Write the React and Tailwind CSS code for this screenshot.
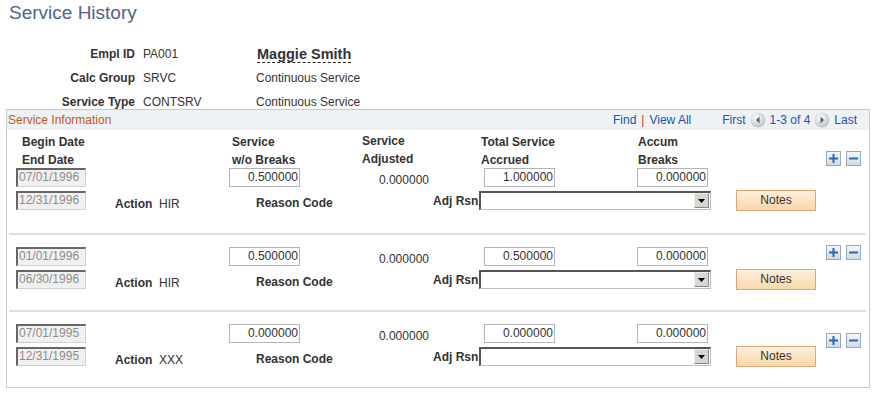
import React from 'react';

const rows = [
  { begin: '07/01/1996', end: '12/31/1996', svc: '0.500000', adj: '0.000000', total: '1.000000', accum: '0.000000', action: 'HIR' },
  { begin: '01/01/1996', end: '06/30/1996', svc: '0.500000', adj: '0.000000', total: '0.500000', accum: '0.000000', action: 'HIR' },
  { begin: '07/01/1995', end: '12/31/1995', svc: '0.000000', adj: '0.000000', total: '0.000000', accum: '0.000000', action: 'XXX' },
];

const NavArrow = ({ dir }) => (
  <svg width="16" height="16" viewBox="0 0 16 16">
    <defs>
      <radialGradient id={'g' + dir} cx="40%" cy="35%" r="70%">
        <stop offset="0%" stopColor="#ffffff" />
        <stop offset="100%" stopColor="#b9bec4" />
      </radialGradient>
    </defs>
    <circle cx="8" cy="8" r="7.5" fill={'url(#g' + dir + ')'} />
    {dir === 'left' ? (
      <path d="M9.5 4.5 L6 8 L9.5 11.5 Z" fill="#5a5f66" />
    ) : (
      <path d="M6.5 4.5 L10 8 L6.5 11.5 Z" fill="#5a5f66" />
    )}
  </svg>
);

const RowButtons = ({ className }) => (
  <div className={'flex gap-[5px] ' + className}>
    <div className="w-[15px] h-[15px] border border-[#98a8b8] bg-gradient-to-b from-[#f4f7fa] to-[#cfdae4] flex items-center justify-center">
      <svg width="11" height="11" viewBox="0 0 11 11">
        <rect x="4.5" y="1" width="2" height="9" fill="#2d68ad" />
        <rect x="1" y="4.5" width="9" height="2" fill="#2d68ad" />
      </svg>
    </div>
    <div className="w-[15px] h-[15px] border border-[#98a8b8] bg-gradient-to-b from-[#f4f7fa] to-[#cfdae4] flex items-center justify-center">
      <svg width="11" height="11" viewBox="0 0 11 11">
        <rect x="1" y="4.5" width="9" height="2" fill="#2d68ad" />
      </svg>
    </div>
  </div>
);

const DateBox = ({ value }) => (
  <div className="ml-[7px] w-[70px] h-[19px] shrink-0 bg-[#f0f0f0] border-t-2 border-l-2 border-r border-b border-t-[#666] border-l-[#666] border-r-[#d0d0d0] border-b-[#d0d0d0] text-[12px] leading-[15px] text-[#8c8c8c] pl-[1px]">
    {value}
  </div>
);

const NumBox = ({ value, className }) => (
  <div className={'w-[71px] h-[19px] shrink-0 border border-[#b4b4b4] bg-white text-right text-[12px] leading-[17px] text-[#333] pr-[1px] ' + className}>
    {value}
  </div>
);

const ServiceRow = ({ row, first, btnClass }) => (
  <div className={'mx-[2px] mr-[3px] flex ' + (first ? 'pb-[23px]' : 'border-t-2 border-[#dedede] pt-[12px] pb-[21px]')}>
    <div className="w-[817px] flex flex-col gap-[4px]">
      <div className="flex items-start h-[19px]">
        <DateBox value={row.begin} />
        <NumBox value={row.svc} className="ml-[143px]" />
        <div className="w-[129px] h-[19px] text-right text-[12px] leading-[19px] text-[#333] pt-[3px] box-content -mb-[3px]">{row.adj}</div>
        <NumBox value={row.total} className="ml-[55px]" />
        <NumBox value={row.accum} className="ml-[82px]" />
      </div>
      <div className="flex items-start h-[19px]">
        <DateBox value={row.end} />
        <div className="ml-[29px] w-[44px] h-[19px] font-bold text-[12px] leading-[19px] text-[#333] translate-y-[4px]">Action</div>
        <div className="w-[97px] h-[19px] text-[12px] leading-[19px] text-[#333] translate-y-[4px]">{row.action}</div>
        <div className="w-[177px] h-[19px] font-bold text-[12px] leading-[19px] text-[#333] translate-y-[3px]">Reason Code</div>
        <div className="w-[46px] h-[19px] font-bold text-[12px] leading-[19px] text-[#333] translate-y-[1px]">Adj Rsn</div>
        <div className="w-[232px] h-[19px] shrink-0 bg-white border-t-2 border-l-2 border-r border-b border-t-[#555] border-l-[#555] border-r-[#bdbdbd] border-b-[#bdbdbd] flex justify-end">
          <div className="w-[15px] h-[15px] mr-[1px] bg-[#d8d6d0] border border-[#eee] border-r-[#888] border-b-[#888] flex items-center justify-center">
            <svg width="7" height="4" viewBox="0 0 7 4"><path d="M0 0 H7 L3.5 4 Z" fill="#000" /></svg>
          </div>
        </div>
        <div className="ml-[25px] w-[80px] h-[21px] shrink-0 -translate-y-[1px] border border-[#dba878] bg-gradient-to-b from-[#fdf0dc] to-[#f8d8a8] text-[12px] leading-[19px] text-[#333] text-center">
          Notes
        </div>
      </div>
    </div>
    {btnClass && <RowButtons className={btnClass} />}
  </div>
);

export default function App() {
  return (
    <div className="w-[876px] h-[393px] bg-white overflow-hidden font-['Liberation_Sans',Arial,sans-serif] text-[#333]">
      <div className="pl-[9px] pt-[1px] text-[19px] leading-[24px] text-[#4f6289]">Service History</div>

      <div className="mt-[19px] flex flex-col gap-[4px] text-[12px]">
        <div className="flex items-center h-[20px]">
          <div className="w-[135px] text-right font-bold">Empl ID</div>
          <div className="ml-[8px] w-[114px]">PA001</div>
          <span className="text-[14.5px] leading-[16px] font-bold text-[#333] border-b border-dashed border-[#222]">Maggie Smith</span>
        </div>
        <div className="flex items-center h-[20px]">
          <div className="w-[135px] text-right font-bold">Calc Group</div>
          <div className="ml-[8px] w-[113px]">SRVC</div>
          <div>Continuous Service</div>
        </div>
        <div className="flex items-center h-[20px]">
          <div className="w-[135px] text-right font-bold">Service Type</div>
          <div className="ml-[8px] w-[113px]">CONTSRV</div>
          <div>Continuous Service</div>
        </div>
      </div>

      <div className="ml-[6px] w-[864px] -mt-[3px] border border-[#c9c9c9] text-[12px]">
        <div className="h-[20px] bg-[#eef2f4] flex items-center">
          <div className="pl-[1px] text-[#c05a1c]">Service Information</div>
          <div className="ml-auto flex items-center pr-[12px] text-[#2352a6]">
            <span>Find</span>
            <span className="mx-[5px] text-[#c0392b]">|</span>
            <span>View All</span>
            <span className="ml-[31px]">First</span>
            <span className="mx-[4px] flex"><NavArrow dir="left" /></span>
            <span>1-3 of 4</span>
            <span className="mx-[4px] flex"><NavArrow dir="right" /></span>
            <span>Last</span>
          </div>
        </div>

        <div className="mx-[2px] mr-[3px] mt-[3px] h-[35px] flex font-bold text-[#333] leading-[18px]">
          <div className="w-[817px] flex">
            <div className="ml-[13px] w-[210px]"><div>Begin Date</div><div>End Date</div></div>
            <div className="w-[130px]"><div>Service</div><div>w/o Breaks</div></div>
            <div className="w-[119px] -mt-[1px]"><div>Service</div><div>Adjusted</div></div>
            <div className="w-[157px]"><div>Total Service</div><div>Accrued</div></div>
            <div className="w-[120px]"><div>Accum</div><div>Breaks</div></div>
          </div>
          <RowButtons className="mt-[18px]" />
        </div>

        <ServiceRow row={rows[0]} first />
        <ServiceRow row={rows[1]} btnClass="mt-[-2px]" />
        <ServiceRow row={rows[2]} btnClass="mt-[9px]" />
      </div>
    </div>
  );
}
